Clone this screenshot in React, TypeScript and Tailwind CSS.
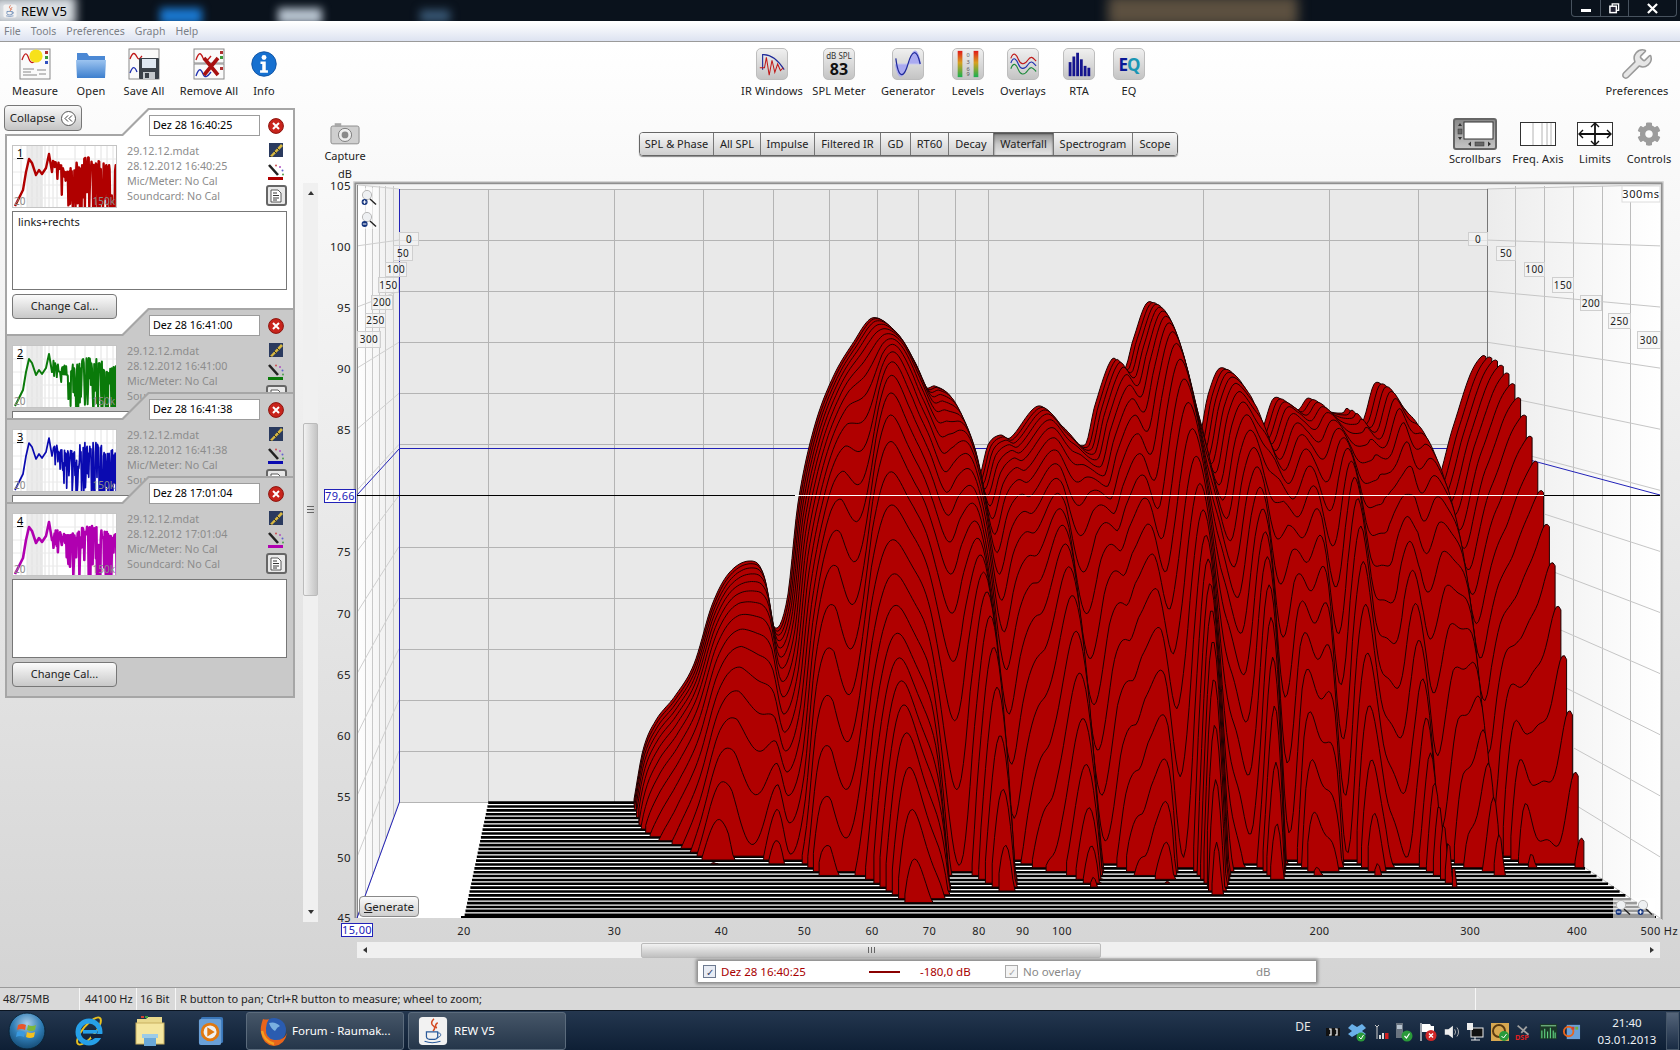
import { ReactNode } from "react";
import { Wrench } from "lucide-react";
import { FaCog } from "react-icons/fa";

// ---- waterfall geometry (page pixels, the svg viewBox uses the same numbers)
const SLICES = 30;
const backX = (u: number) => 399 + 1088 * u;
const frontX = (u: number) => 357 + 1303 * u;
const backY = (db: number) => 802 - (db - 45) * 10.217;
const frontY = (db: number) => 918 - (db - 45) * 12.22;
const mix = (a: number, b: number, t: number) => a + (b - a) * t;
const logU = (f: number) => Math.log10(f / 15) / Math.log10(500 / 15);

const OUTLINE: [number, number][] = [
  [560, 960], [620, 860], [632, 810], [643, 750], [656, 720], [675, 696], [694, 664], [712, 605], [729, 573], [750, 561],
  [763, 573], [774, 627], [787, 600], [798, 503], [814, 428], [833, 377], [853, 343], [872, 318], [893, 330], [910, 357],
  [925, 387], [935, 386], [950, 397], [963, 430], [977, 480], [988, 445], [1000, 435], [1010, 438], [1038, 406], [1060, 425],
  [1085, 445], [1095, 405], [1112, 359], [1125, 368], [1133, 340], [1148, 302], [1165, 325], [1178, 380], [1196, 448], [1208, 395],
  [1220, 368], [1238, 385], [1258, 435], [1273, 399], [1285, 402], [1298, 410], [1308, 398], [1325, 410], [1343, 413], [1347, 408],
  [1362, 422], [1375, 383], [1392, 400], [1408, 427], [1432, 490], [1453, 427], [1470, 375], [1482, 356], [1488, 358],
];

function outlineY(x: number) {
  const p = OUTLINE;
  if (x >= p[p.length - 1][0]) return p[p.length - 1][1];
  let k = 0;
  while (p[k + 1][0] < x) k++;
  const a = p[Math.max(k - 1, 0)], b = p[k], c = p[k + 1], d = p[Math.min(k + 2, p.length - 1)];
  const t = (x - b[0]) / (c[0] - b[0]);
  const m1 = ((c[1] - a[1]) / (c[0] - a[0] || 1)) * (c[0] - b[0]);
  const m2 = ((d[1] - b[1]) / (d[0] - b[0] || 1)) * (c[0] - b[0]);
  const t2 = t * t, t3 = t2 * t;
  return (2 * t3 - 3 * t2 + 1) * b[1] + (t3 - 2 * t2 + t) * m1 + (-2 * t3 + 3 * t2) * c[1] + (t3 - t2) * m2;
}

function lobes(x: number, i: number) {
  const p = 5e-4 * Math.pow(Math.max(x - 600, 0), 1.5) + 0.13 * Math.sin(x / 83 + i * 0.23);
  const spread = 0.75 + 0.25 * Math.sin(x / 37 + i * 0.4);
  const l = spread * (0.7 * Math.sin(2 * Math.PI * p - 1.38 + 0.05 * i) + 0.3 * Math.sin(2 * Math.PI * 1.7 * p + 1 + 0.17 * i));
  const fade = Math.min(1, (1487 - x) / 60);
  return (l > 0 ? 0.42 * l : 0.62 * l) * fade;
}

function drop(i: number) {
  return i <= 16 ? 0.3 * Math.pow(i, 2.4) : 232 + 36 * (i - 16);
}

function level(x: number, i: number) {
  const top = 45 + (802 - outlineY(x)) / 10.217;
  const w = x < 900 ? 1 : 1 + (0.7 * (x - 900)) / 587;
  return top - (drop(i) * w * (1 - lobes(x, i))) / 11;
}

function slicePaths(i: number) {
  const t = i / SLICES;
  const base = mix(802, 918, t);
  const paths: string[] = [];
  let run: string[] = [];
  const close = (x: number) => {
    if (run.length) paths.push(`M${run[0].split(",")[0]},${base} L${run.join(" L")} L${x.toFixed(1)},${base} Z`);
    run = [];
  };
  let last = 0;
  for (let bx = 560; bx <= 1487; bx += 2) {
    const u = (bx - 399) / 1088;
    const db = level(bx, i);
    const px = mix(backX(u), frontX(u), t);
    last = px;
    if (db > 45) run.push(`${px.toFixed(1)},${mix(backY(db), frontY(db), t).toFixed(1)}`);
    else close(px);
  }
  close(last);
  return paths;
}

const WATERFALL = Array.from({ length: SLICES }, (_, i) => slicePaths(i));
const FREQ = [20, 30, 40, 50, 60, 70, 80, 90, 100, 200, 300, 400, 500];
const DB_LINES = Array.from({ length: 13 }, (_, k) => 105 - k * 5);
const TIME_LEFT = [365, 372, 379, 385, 393];
const TIME_RIGHT = [1515, 1544, 1573, 1602, 1630];
const LEFT_TAGS: [string, number, number, number, number][] = [
  ["0", 399, 232, 19, 13], ["50", 393, 245, 19, 15], ["100", 385, 262, 21, 14], ["150", 378, 277, 20, 15],
  ["200", 371, 295, 21, 14], ["250", 365, 313, 20, 14], ["300", 357, 331, 23, 16],
];
const RIGHT_TAGS: [string, number, number, number, number][] = [
  ["0", 1468, 232, 19, 13], ["50", 1496, 246, 19, 14], ["100", 1524, 262, 20, 14], ["150", 1552, 277, 21, 15],
  ["200", 1580, 295, 21, 15], ["250", 1608, 313, 22, 15], ["300", 1637, 331, 23, 17],
];

function MagnifierIcon({ x, y, plus }: { x: number; y: number; plus?: boolean }) {
  return (
    <g transform={`translate(${x},${y})`}>
      <circle cx="6" cy="6" r="4.6" fill="#eef0f2" stroke="#b9b9b9" />
      <path d="M9 10 L15 15.5" stroke="#222" strokeWidth="1.4" />
      <circle cx="3.6" cy="13" r="3" fill="#15357e" />
      <path d="M1.8 13 H5.4" stroke="#fff" strokeWidth="1" />
      {plus && <path d="M3.6 11.2 V14.8" stroke="#fff" strokeWidth="1" />}
    </g>
  );
}

function TimeTag({ tag }: { tag: [string, number, number, number, number] }) {
  const [label, x, y, w, h] = tag;
  return (
    <g>
      <rect x={x + 0.5} y={y + 0.5} width={w} height={h} fill="#f4f4f4" fillOpacity="0.7" stroke="#cfcfcf" />
      <text x={x + w / 2 + 0.5} y={y + h / 2 + 4} textAnchor="middle" fontSize="10" fill="#222" letterSpacing="0.4">{label}</text>
    </g>
  );
}

function WaterfallChart() {
  return (
    <svg viewBox="318 170 1362 772" className="block w-[1362px] h-[772px] overflow-visible" fontFamily="'Noto Sans', sans-serif">
      <defs>
        <linearGradient id="wallL" x1="0" x2="1" y1="0" y2="0">
          <stop offset="0" stopColor="#ffffff" />
          <stop offset="1" stopColor="#ececec" />
        </linearGradient>
        <linearGradient id="wallR" x1="0" x2="1" y1="0" y2="0">
          <stop offset="0" stopColor="#ececec" />
          <stop offset="1" stopColor="#ffffff" />
        </linearGradient>
      </defs>

      <path d="M353.5 918 V181.5 H1663.5 V922" fill="none" stroke="#d6d6d6" />
      <path d="M354.5 918 V182.5 H1662.5 V920" fill="none" stroke="#b4b4b4" />
      <path d="M355.5 918 V183.5 H1661.5 V919" fill="none" stroke="#8f8f8f" strokeWidth="1.4" />

      <polygon points="357,185 399,189 399,802 357,918" fill="url(#wallL)" />
      <polygon points="1660,185 1487,189 1487,802 1660,918" fill="url(#wallR)" />
      <polygon points="357,185 1660,185 1487,189 399,189" fill="#f4f4f4" />
      <rect x="399" y="189" width="1088" height="613" fill="#e9e9e9" />
      <polygon points="399,802 1487,802 1660,918 357,918" fill="#ffffff" />

      {TIME_LEFT.map((x) => (
        <line key={x} x1={x + 0.5} x2={x + 0.5} y1="186" y2={802 + ((399 - x) / 42) * 116} stroke="#c8c8c8" />
      ))}
      {TIME_RIGHT.map((x) => (
        <line key={x} x1={x + 0.5} x2={x + 0.5} y1="186" y2={802 + ((x - 1487) / 173) * 116} stroke="#bdbdbd" />
      ))}
      {DB_LINES.map((db) => (
        <g key={db} stroke="#cfcfcf">
          <line x1="357" x2="399" y1={frontY(db)} y2={backY(db)} />
          <line x1="1487" x2="1660" y1={backY(db)} y2={frontY(db)} stroke="#c6c6c6" />
          <line x1="399" x2="1487" y1={Math.round(backY(db)) + 0.5} y2={Math.round(backY(db)) + 0.5} stroke="#b4b4b4" />
        </g>
      ))}
      {FREQ.map((f) => {
        const x = Math.round(backX(logU(f))) + 0.5;
        return <line key={f} x1={x} x2={x} y1="189" y2="802" stroke={f === 500 ? "#777" : "#b4b4b4"} />;
      })}
      <line x1="357.5" x2="357.5" y1="185" y2="918" stroke="#888" />

      <path d="M399.5 189 V802 L357 918" fill="none" stroke="#2222b8" />
      <path d="M357 495 L399.5 448.5 H1487 L1660 495" fill="none" stroke="#2222b8" />

      {WATERFALL.map((paths, i) => {
        const t = i / SLICES;
        const y = mix(802, 918, t);
        return (
          <g key={i}>
            <line x1={mix(backX(0.082), frontX(0.082), t)} x2={mix(backX(1), frontX(1), t)} y1={y + 0.6} y2={y + 0.6} stroke="#000" strokeWidth="2.6" />
            {paths.map((d, k) => (
              <path key={k} d={d} fill="#b00000" stroke="#1c0000" strokeWidth="1" strokeLinejoin="round" />
            ))}
          </g>
        );
      })}
      <line x1="461" x2="1656" y1="917" y2="917" stroke="#000" strokeWidth="2" />

      <line x1="357" x2="795" y1="495.5" y2="495.5" stroke="#000" strokeWidth="1.2" />
      <line x1="795" x2="1544" y1="495.5" y2="495.5" stroke="#fff" strokeWidth="1.2" />
      <line x1="1544" x2="1660" y1="495.5" y2="495.5" stroke="#000" strokeWidth="1.2" />

      {LEFT_TAGS.map((t) => <TimeTag key={t[0]} tag={t} />)}
      {RIGHT_TAGS.map((t) => <TimeTag key={t[0]} tag={t} />)}
      <rect x="1622" y="186" width="38" height="16" fill="#fff" stroke="#dcdcdc" />
      <text x="1641" y="198" textAnchor="middle" fontSize="11" fill="#222" letterSpacing="0.6">300ms</text>

      <rect x="360" y="188" width="18" height="41" fill="#fff" fillOpacity="0.5" />
      <MagnifierIcon x={361} y={189} plus />
      <MagnifierIcon x={361} y={211} />
      <rect x="1613" y="898" width="42" height="20" fill="#fff" fillOpacity="0.6" />
      <MagnifierIcon x={1615} y={899} />
      <MagnifierIcon x={1637} y={899} plus />

      <text x="352" y="178" textAnchor="end" fontSize="11" fill="#222">dB</text>
      {DB_LINES.filter((d) => d !== 80 && d !== 45).map((db) => (
        <text key={db} x="351" y={frontY(db) + 5} textAnchor="end" fontSize="11.5" fill="#222" letterSpacing="0.4">{db}</text>
      ))}
      <text x="351" y="922" textAnchor="end" fontSize="11" fill="#222" letterSpacing="0.4">45</text>
      <rect x="324.5" y="489.5" width="31" height="13" fill="#fff" stroke="#2222b8" />
      <text x="340" y="500" textAnchor="middle" fontSize="11" fill="#2222b8" letterSpacing="0.4">79,66</text>
      <rect x="341.5" y="923.5" width="31" height="13" fill="#fff" stroke="#2222b8" />
      <text x="357" y="934" textAnchor="middle" fontSize="11" fill="#2222b8" letterSpacing="0.4">15,00</text>
      {FREQ.map((f) => (
        <text key={f} x={f === 500 ? 1678 : frontX(logU(f))} y="935" textAnchor={f === 500 ? "end" : "middle"} fontSize="11" fill="#222" letterSpacing="0.4">
          {f === 500 ? "500 Hz" : f}
        </text>
      ))}
    </svg>
  );
}

// ---- toolbar icons
function Tile({ children }: { children: ReactNode }) {
  return (
    <div className="w-[32px] h-[32px] rounded-[5px] border border-[#bdbdbd] bg-linear-to-b from-[#f0f0f0] to-[#c4c4c4] flex flex-col items-center justify-center overflow-hidden">
      {children}
    </div>
  );
}

function DocBase({ children }: { children?: ReactNode }) {
  return (
    <svg viewBox="0 0 32 32" className="w-[32px] h-[32px]">
      <rect x="1" y="1" width="30" height="30" fill="#fafafa" stroke="#8a8a8a" />
      <path d="M3 12 C6 3 8 5 10 11 S16 15 21 7" fill="none" stroke="#c01818" strokeWidth="1.3" />
      <rect x="26" y="3" width="3" height="3" fill="#b03030" />
      <rect x="26" y="8" width="3" height="3" fill="#3a9a3a" />
      <rect x="26" y="13" width="3" height="3" fill="#3050c0" />
      {children}
    </svg>
  );
}

function MeasureIcon() {
  return (
    <DocBase>
      <path d="M4 21 H15 M4 24 H12 M4 27 H18 M18 22 H27 M20 26 H27" stroke="#888" />
      <circle cx="17" cy="8" r="6.6" fill="#f7e11a" />
    </DocBase>
  );
}

function SaveIcon() {
  return (
    <svg viewBox="0 0 32 32" className="w-[32px] h-[32px]">
      <rect x="1" y="1" width="30" height="30" fill="#fafafa" stroke="#8a8a8a" />
      <path d="M2 11 C5 3 7 5 9 9 S12 10 14 8" fill="none" stroke="#c01818" strokeWidth="1.3" />
      <path d="M2 25 C5 17 7 19 9 24" fill="none" stroke="#2030b0" strokeWidth="1.3" />
      <rect x="11" y="10" width="20" height="21" rx="1" fill="#3a4048" />
      <rect x="14" y="11" width="14" height="9" fill="#dfe7f1" />
      <rect x="15" y="24" width="12" height="7" fill="#c4c8cc" />
      <rect x="17" y="25" width="4" height="5" fill="#3a4048" />
    </svg>
  );
}

function RemoveIcon() {
  return (
    <svg viewBox="0 0 32 32" className="w-[32px] h-[32px]">
      <rect x="1" y="1" width="30" height="14" fill="#fafafa" stroke="#8a8a8a" />
      <rect x="1" y="16" width="30" height="15" fill="#fafafa" stroke="#8a8a8a" />
      <path d="M3 12 C6 3 8 5 10 10 S15 12 18 8" fill="none" stroke="#c01818" strokeWidth="1.3" />
      <path d="M3 28 C6 19 8 21 10 26 S15 28 18 24" fill="none" stroke="#2030b0" strokeWidth="1.3" />
      <rect x="27" y="3" width="3" height="3" fill="#b03030" />
      <rect x="27" y="8" width="3" height="3" fill="#3a9a3a" />
      <rect x="27" y="19" width="3" height="3" fill="#b03030" />
      <path d="M11 10 L25 27 M25 10 L11 27" stroke="#a81010" strokeWidth="3.6" />
    </svg>
  );
}

function FolderIcon() {
  return (
    <svg viewBox="0 0 32 32" className="w-[32px] h-[32px]">
      <defs>
        <linearGradient id="folderG" x1="0" x2="0" y1="0" y2="1">
          <stop offset="0" stopColor="#9cc4f0" />
          <stop offset="1" stopColor="#3d7fce" />
        </linearGradient>
      </defs>
      <path d="M2 5 H12 L14 8 H30 V14 H2 Z" fill="#4b88d4" />
      <path d="M1 12 H31 L30 30 H2 Z" fill="url(#folderG)" />
    </svg>
  );
}

function InfoIcon() {
  return (
    <svg viewBox="0 0 32 32" className="w-[28px] h-[32px]">
      <circle cx="16" cy="16" r="14" fill="#1670d0" />
      <circle cx="16" cy="16" r="14" fill="none" stroke="#0d4f9e" />
      <circle cx="16" cy="8.5" r="2.8" fill="#fff" />
      <path d="M12 13 H18 V23 H20.5 V26 H11.5 V23 H14 V16 H12 Z" fill="#fff" />
    </svg>
  );
}

function IrIcon() {
  return (
    <svg viewBox="0 0 32 32" className="w-[30px] h-[30px]">
      <path d="M6 22 V6 Q18 5 29 22" fill="none" stroke="#1f2a9a" strokeWidth="1.2" />
      <path d="M3 20 H8 L10 9 L13 28 L16 12 L19 25 L22 16 L25 23 L28 20" fill="none" stroke="#c01818" strokeWidth="1.1" />
    </svg>
  );
}

function GeneratorIcon() {
  return (
    <svg viewBox="0 0 32 32" className="w-[30px] h-[30px]">
      <path d="M2 16 C6 38 12 30 16 16 C20 0 26 -6 30 16 H2 Z" fill="#aaaaf0" />
      <path d="M2 16 H30" stroke="#c8c8f0" />
      <path d="M3 10 C6 34 12 30 16 16 C20 2 25 -2 29 16" fill="none" stroke="#1f2a9a" strokeWidth="1.3" />
    </svg>
  );
}

function LevelsIcon() {
  return (
    <svg viewBox="0 0 32 32" className="w-[30px] h-[30px]">
      <defs>
        <linearGradient id="lvlG" x1="0" x2="0" y1="0" y2="1">
          <stop offset="0" stopColor="#e01818" />
          <stop offset="0.45" stopColor="#d8a020" />
          <stop offset="1" stopColor="#18b050" />
        </linearGradient>
      </defs>
      <rect x="5" y="2" width="5" height="28" fill="url(#lvlG)" />
      <rect x="22" y="2" width="5" height="28" fill="url(#lvlG)" />
      <text x="16" y="9" textAnchor="middle" fontSize="6" fill="#555">0</text>
      <text x="16" y="16" textAnchor="middle" fontSize="6" fill="#555">3</text>
      <text x="16" y="23" textAnchor="middle" fontSize="6" fill="#555">6</text>
      <text x="16" y="29" textAnchor="middle" fontSize="6" fill="#555">9</text>
    </svg>
  );
}

function OverlaysIcon() {
  return (
    <svg viewBox="0 0 32 32" className="w-[30px] h-[30px]" fill="none" strokeWidth="1.2">
      <path d="M3 10 C6 2 9 6 11 11 S17 18 21 12 S27 10 30 13" stroke="#c01818" />
      <path d="M3 15 C6 7 9 11 11 16 S17 23 21 17 S27 15 30 18" stroke="#2030b0" />
      <path d="M3 21 C6 13 9 17 11 22 S17 29 21 23 S27 21 30 24" stroke="#1c8a3a" />
    </svg>
  );
}

function RtaIcon() {
  return (
    <svg viewBox="0 0 32 32" className="w-[30px] h-[30px]" fill="#14148e">
      <rect x="5" y="14" width="3" height="15" />
      <rect x="9" y="8" width="3" height="21" />
      <rect x="13" y="4" width="3" height="25" />
      <rect x="17" y="11" width="3" height="18" />
      <rect x="21" y="18" width="3" height="11" />
      <rect x="25" y="20" width="3" height="9" />
    </svg>
  );
}

function ToolItem({ label, icon, width }: { label: string; icon: ReactNode; width: string }) {
  return (
    <div className={`${width} shrink-0 flex flex-col items-center`}>
      <div className="h-[32px] flex items-center justify-center">{icon}</div>
      <div className="mt-[3px] text-[11px] leading-[15px] text-[#222] whitespace-nowrap tracking-[0.15px]">{label}</div>
    </div>
  );
}

// ---- measurement panels
function RedX() {
  return (
    <svg viewBox="0 0 16 16" className="w-[16px] h-[16px] shrink-0">
      <circle cx="8" cy="8" r="7.4" fill="#c8241c" stroke="#8c140e" />
      <path d="M5 5 L11 11 M11 5 L5 11" stroke="#fff" strokeWidth="2" />
    </svg>
  );
}

function PencilIcon() {
  return (
    <svg viewBox="0 0 16 16" className="w-[16px] h-[16px]">
      <rect x="1" y="1" width="14" height="14" fill="#2a3a5e" />
      <path d="M2 14 L13 2 L15 4 L4 15 Z" fill="#d8b840" />
      <path d="M6 9 L9 12 M9 6 L12 9" stroke="#3a3a20" />
      <path d="M2 14 L4 15 L2 15 Z" fill="#222" />
    </svg>
  );
}

function ColourIcon({ color }: { color: string }) {
  return (
    <svg viewBox="0 0 18 18" className="w-[18px] h-[18px]">
      <path d="M2 2 L11 12" stroke="#222" strokeWidth="2.6" />
      <circle cx="9" cy="2.5" r="1" fill="#d05050" />
      <circle cx="13" cy="4" r="1" fill="#b050c0" />
      <circle cx="15.5" cy="7.5" r="1" fill="#6060d0" />
      <circle cx="16" cy="11.5" r="1" fill="#50a050" />
      <rect x="1" y="14" width="15" height="3" fill={color} />
    </svg>
  );
}

function NoteButton() {
  return (
    <div className="w-[21px] h-[21px] rounded-[3px] border-2 border-[#666] bg-[#e8e8e8] flex items-center justify-center">
      <svg viewBox="0 0 12 14" className="w-[12px] h-[14px]">
        <path d="M1 1 H8 L11 4 V13 H1 Z" fill="#fff" stroke="#333" strokeWidth="0.8" />
        <path d="M3 4 H7 M3 6.5 H9 M3 9 H9 M3 11 H7" stroke="#222" strokeWidth="0.9" />
      </svg>
    </div>
  );
}

function traceLine(seed: number) {
  const head: [number, number][] = [[2, 60], [7, 50], [10, 44], [13, 26], [16, 13], [19, 17], [23, 29], [26, 24], [29, 28], [33, 22], [36, 8], [39, 26]];
  const pts = head.map((p) => p.join(","));
  for (let x = 40; x <= 104; x += 0.55) {
    const a = Math.sin(x * 12.9898 + seed) * 43758.5453;
    const r = a - Math.floor(a);
    const b = Math.sin(x * 78.233 + seed * 3) * 12543.123;
    const q = b - Math.floor(b);
    const deep = r > 0.45 ? (14 + (x - 40) * 0.95) * q * 1.5 : 10 * q;
    pts.push(`${x.toFixed(1)},${Math.min(15 + 4 * Math.sin(x / 7) + deep, 62).toFixed(1)}`);
  }
  return pts.join(" ");
}

function Thumb({ n, color, seed, width }: { n: number; color: string; seed: number; width: number }) {
  const grid = [8, 14, 19, 24, 28, 32, 36, 40, 44, 62, 72, 82, 88, 94, 100];
  return (
    <div className="relative w-[105px] h-[63px] shrink-0 border border-[#c4c4c4] bg-white overflow-hidden">
      <svg viewBox="0 0 105 63" className="block w-[105px] h-[63px]">
        <rect x="14" y="0" width="16" height="63" fill="#ececec" />
        {grid.map((x) => <line key={x} x1={x} x2={x} y1="0" y2="63" stroke="#e2e2e2" />)}
        {[13, 26, 39, 52].map((y) => <line key={y} x1="0" x2="105" y1={y} y2={y} stroke="#eaeaea" />)}
        <polyline points={traceLine(seed)} fill="none" stroke={color} strokeWidth={width} strokeLinejoin="round" />
      </svg>
      <span className="absolute left-[4px] top-[-1px] text-[11px] leading-[15px] text-black underline">{n}</span>
      <span className="absolute left-[1px] bottom-[-1px] text-[10px] leading-[13px] text-[#8a8a8a]">20</span>
      <span className="absolute right-[1px] bottom-[-1px] text-[10px] leading-[13px] text-[#8a8a8a]">150k</span>
    </div>
  );
}

function Panel({ p }: { p: (typeof PANELS)[number] }) {
  return (
    <div className={`relative ${p.layer} ${p.outer} w-[290px] ml-[5px] bg-[#a6a6a6] [clip-path:polygon(143px_0,100%_0,100%_100%,0_100%,0_26px,117px_26px)]`}>
      <div className={`h-full ${p.bg} [clip-path:polygon(144px_2px,288px_2px,288px_calc(100%_-_2px),2px_calc(100%_-_2px),2px_28px,118px_28px)]`}>
        <div className="flex items-center pt-[7px]">
          <div className="ml-[144px] w-[111px] h-[21px] bg-white border border-[#9c9c9c] pl-[3px] text-[10.75px] leading-[19px] text-black">{p.name}</div>
          <div className="ml-[8px]"><RedX /></div>
        </div>
        <div className="flex mt-[9px] ml-[7px] h-[63px]">
          <Thumb n={p.n} color={p.color} seed={p.seed} width={p.trace} />
          <div className="ml-[10px] -mt-[1px] w-[133px] text-[10.75px] leading-[15px] text-[#8c8c8c] whitespace-nowrap">
            <div>29.12.12.mdat</div>
            <div>{p.date}</div>
            <div>Mic/Meter: No Cal</div>
            <div>Soundcard: No Cal</div>
          </div>
          <div className="w-[22px] ml-[5px] flex flex-col items-center">
            <div className="mt-[-3px]"><PencilIcon /></div>
            <div className="mt-[5px]"><ColourIcon color={p.color} /></div>
            <div className="mt-[4px]"><NoteButton /></div>
          </div>
        </div>
        <div className="mt-[3px] ml-[7px] w-[275px] h-[79px] bg-white border border-[#777] px-[5px] text-[11px] leading-[20px] text-[#222]">{p.note}</div>
        <button className="mt-[4px] ml-[7px] w-[105px] h-[25px] rounded-[4px] border border-[#777] bg-linear-to-b from-[#fbfbfb] to-[#c8c8c8] text-[11px] text-[#222]">Change Cal...</button>
      </div>
    </div>
  );
}

const PANELS = [
  { n: 1, name: "Dez 28 16:40:25", date: "28.12.2012 16:40:25", color: "#b00000", seed: 3, trace: 2.4, note: "links+rechts", bg: "bg-white", outer: "h-[228px] -mb-[28px]", layer: "z-[1]" },
  { n: 2, name: "Dez 28 16:41:00", date: "28.12.2012 16:41:00", color: "#0a7a0a", seed: 5, trace: 2, note: "links", bg: "bg-[#c9c9c9]", outer: "h-[221px] -mb-[137px]", layer: "z-[2]" },
  { n: 3, name: "Dez 28 16:41:38", date: "28.12.2012 16:41:38", color: "#0a0ab0", seed: 7, trace: 1.7, note: "rechts", bg: "bg-[#c9c9c9]", outer: "h-[221px] -mb-[137px]", layer: "z-[3]" },
  { n: 4, name: "Dez 28 17:01:04", date: "28.12.2012 17:01:04", color: "#b000b0", seed: 11, trace: 2.6, note: "", bg: "bg-[#c9c9c9]", outer: "h-[222px]", layer: "z-[4]" },
];

function Sidebar() {
  return (
    <div className="w-[318px] shrink-0 flex">
      <div className="w-[295px] shrink-0">
        <button className="relative z-[10] ml-[4px] -mb-[23px] w-[78px] h-[26px] rounded-[4px] border border-[#777] bg-linear-to-b from-[#fafafa] to-[#c4c4c4] flex items-center justify-center gap-[6px] text-[11.5px] text-[#222]">
          Collapse
          <span className="w-[15px] h-[15px] rounded-full border border-[#555] bg-white flex items-center justify-center">
            <svg viewBox="0 0 10 8" className="w-[9px] h-[7px]"><path d="M4.5 0.5 L1 4 L4.5 7.5 M9 0.5 L5.5 4 L9 7.5" fill="none" stroke="#222" /></svg>
          </span>
        </button>
        {PANELS.map((p) => <Panel key={p.n} p={p} />)}
      </div>
      <div className="ml-[8px] mt-[78px] w-[15px] h-[739px] bg-[#f0f0f0] flex flex-col items-center text-[#333]">
        <div className="mt-[8px] w-0 h-0 border-x-[3px] border-x-transparent border-b-[4px] border-b-[#333]" />
        <div className="mt-[228px] w-[15px] h-[173px] rounded-[2px] border border-[#bbb] bg-linear-to-r from-[#f2f2f2] to-[#c4c4c4] flex flex-col items-center justify-center gap-[2px]">
          <div className="w-[7px] h-px bg-[#666]" />
          <div className="w-[7px] h-px bg-[#666]" />
          <div className="w-[7px] h-px bg-[#666]" />
        </div>
        <div className="mt-auto mb-[8px] w-0 h-0 border-x-[3px] border-x-transparent border-t-[4px] border-t-[#333]" />
      </div>
    </div>
  );
}

// ---- graph header
const TABS = [
  { label: "SPL & Phase", w: "w-[74px]" }, { label: "All SPL", w: "w-[47px]" }, { label: "Impulse", w: "w-[54px]" },
  { label: "Filtered IR", w: "w-[66px]" }, { label: "GD", w: "w-[30px]" }, { label: "RT60", w: "w-[38px]" },
  { label: "Decay", w: "w-[45px]" }, { label: "Waterfall", w: "w-[60px]", on: true }, { label: "Spectrogram", w: "w-[79px]" },
  { label: "Scope", w: "w-[44px]" },
];

function GraphTabs() {
  return (
    <div className="ml-[267px] mt-[27px] h-[24px] w-[539px] shrink-0 flex rounded-[4px] border border-[#666] shadow-[0_1px_1px_#888] overflow-hidden">
      {TABS.map((t) => (
        <div
          key={t.label}
          className={`${t.w} shrink-0 flex items-center justify-center text-[11px] text-[#222] whitespace-nowrap border-r border-[#777] last:border-r-0 ${
            t.on ? "bg-linear-to-b from-[#8c8c8c] via-[#c8c8c8] to-[#e4e4e4] shadow-[inset_0_1px_2px_#444]" : "bg-linear-to-b from-[#f8f8f8] to-[#cfcfcf]"
          }`}
        >
          {t.label}
        </div>
      ))}
    </div>
  );
}

function CameraIcon() {
  return (
    <svg viewBox="0 0 32 24" className="w-[30px] h-[23px]">
      <rect x="1" y="4" width="30" height="19" rx="2" fill="#cfcfcf" stroke="#8a8a8a" />
      <rect x="5" y="1" width="7" height="4" fill="#a8a8a8" />
      <circle cx="16" cy="13.5" r="7" fill="#eee" stroke="#777" />
      <circle cx="16" cy="13.5" r="3.6" fill="#8a8a8a" />
    </svg>
  );
}

function ScrollbarsIcon() {
  return (
    <div className="w-[44px] h-[32px] rounded-[3px] border-2 border-[#666] bg-linear-to-b from-[#8a8a8a] to-[#c4c4c4] flex">
      <svg viewBox="0 0 40 28" className="w-[40px] h-[28px]">
        <rect x="9" y="2" width="29" height="17" fill="#fff" stroke="#333" />
        <path d="M3 6 L5 3 L7 6 Z M3 17 L5 20 L7 17 Z M13 24 L16 21.5 L16 26.5 Z M36 24 L33 21.5 L33 26.5 Z" fill="#333" />
        <rect x="3" y="9" width="4" height="5" fill="#666" stroke="#333" strokeWidth="0.5" />
        <rect x="20" y="22" width="9" height="4" fill="#666" stroke="#333" strokeWidth="0.5" />
      </svg>
    </div>
  );
}

function FreqAxisIcon() {
  return (
    <svg viewBox="0 0 36 24" className="w-[36px] h-[24px]">
      <rect x="0.5" y="0.5" width="35" height="23" fill="#fff" stroke="#333" />
      <path d="M13 1 V23 M22 1 V23 M27 1 V23 M31 1 V23" stroke="#b4b4b4" />
    </svg>
  );
}

function LimitsIcon() {
  return (
    <svg viewBox="0 0 36 24" className="w-[36px] h-[24px]" fill="none" stroke="#111">
      <rect x="0.5" y="0.5" width="35" height="23" fill="#fff" stroke="#333" />
      <path d="M2 12 H34 M18 1 V23" strokeWidth="1.8" />
      <path d="M6 8 L2 12 L6 16 M30 8 L34 12 L30 16 M14 5 L18 1 L22 5 M14 19 L18 23 L22 19" strokeWidth="1.4" />
    </svg>
  );
}

function ViewItem({ label, icon, width }: { label: string; icon: ReactNode; width: string }) {
  return (
    <div className={`${width} shrink-0 flex flex-col items-center pt-[13px]`}>
      <div className="h-[32px] flex items-center justify-center">{icon}</div>
      <div className="mt-[1px] text-[11px] leading-[15px] text-[#222] whitespace-nowrap tracking-[0.15px]">{label}</div>
    </div>
  );
}

function LegendCheck({ muted }: { muted?: boolean }) {
  return (
    <div className={`w-[13px] h-[13px] shrink-0 border flex items-center justify-center text-[10px] leading-none ${muted ? "border-[#aaa] bg-[#f4f4f4] text-[#aaa]" : "border-[#6d7a90] bg-[#e8ecf4] text-[#33406a]"}`}>✓</div>
  );
}

// ---- taskbar
function StartOrb() {
  return (
    <svg viewBox="0 0 38 38" className="w-[38px] h-[38px]">
      <defs>
        <radialGradient id="orb" cx="0.5" cy="0.3" r="0.8">
          <stop offset="0" stopColor="#a8cde8" />
          <stop offset="0.5" stopColor="#2f7cb4" />
          <stop offset="1" stopColor="#0c3a5e" />
        </radialGradient>
      </defs>
      <circle cx="19" cy="19" r="18" fill="url(#orb)" stroke="#0a2438" />
      <path d="M10 13 Q14 11 18 13 L17 18 Q13 16 9 18 Z" fill="#e8562a" />
      <path d="M20 13 Q24 15 28 13 L27 18 Q23 20 19 18 Z" fill="#7cb83a" />
      <path d="M9 20 Q13 18 17 20 L16 25 Q12 23 8 25 Z" fill="#3a9ae0" />
      <path d="M19 20 Q23 22 27 20 L26 25 Q22 27 18 25 Z" fill="#f4c020" />
    </svg>
  );
}

function IeIcon() {
  return (
    <svg viewBox="0 0 32 34" className="w-[32px] h-[34px]">
      <ellipse cx="16" cy="17" rx="17" ry="6" transform="rotate(-50 16 17)" fill="none" stroke="#e8c020" strokeWidth="2" />
      <circle cx="16" cy="18" r="11" fill="none" stroke="#26a0e8" strokeWidth="5" />
      <rect x="10" y="16" width="14" height="3.6" fill="#26a0e8" />
      <rect x="18" y="20" width="12" height="4" fill="#13233a" />
    </svg>
  );
}

function FolderTaskIcon() {
  return (
    <svg viewBox="0 0 32 34" className="w-[32px] h-[34px]">
      <path d="M3 5 H12 L14 3 H28 V10 H3 Z" fill="#e8d88c" />
      <rect x="7" y="2" width="3" height="2" fill="#d04030" />
      <rect x="11" y="2" width="3" height="2" fill="#40a040" />
      <rect x="2" y="9" width="28" height="21" fill="#f4e6a0" stroke="#c8b060" />
      <rect x="10" y="22" width="12" height="10" fill="#6aa8d8" />
      <rect x="8" y="20" width="16" height="4" fill="#9ccce8" />
    </svg>
  );
}

function MediaIcon() {
  return (
    <svg viewBox="0 0 28 32" className="w-[26px] h-[30px]">
      <rect x="3" y="1" width="24" height="28" rx="2" fill="#3a76b8" />
      <rect x="1" y="3" width="24" height="28" rx="2" fill="#6aa0d8" />
      <circle cx="13" cy="17" r="8.5" fill="#f0f0f0" stroke="#e07810" strokeWidth="3" />
      <path d="M10 12 L18 17 L10 22 Z" fill="#e07810" />
    </svg>
  );
}

function FirefoxIcon() {
  return (
    <svg viewBox="0 0 32 32" className="w-[32px] h-[32px] shrink-0">
      <circle cx="17" cy="15" r="12" fill="#2a5cb0" />
      <path d="M12 8 Q18 6 23 11 Q20 12 18 16 Q14 14 12 8Z" fill="#7ab0e0" />
      <path d="M6 4 Q3 12 4 18 Q6 30 17 31 Q28 30 30 18 Q27 26 17 25 Q8 23 9 13 Q9 8 12 4 Q9 5 6 4Z" fill="#e8641c" />
      <path d="M5 16 Q7 26 17 29" stroke="#f4a020" strokeWidth="2.4" fill="none" />
    </svg>
  );
}

function JavaIcon({ size }: { size: string }) {
  return (
    <svg viewBox="0 0 32 32" className={`${size} shrink-0`}>
      <rect x="1" y="1" width="30" height="30" rx="4" fill="#f2f2f2" />
      <path d="M17 3 Q12 8 17 11 Q19 13 16 16 M21 7 Q17 10 20 13" fill="none" stroke="#d44a20" strokeWidth="1.6" />
      <path d="M9 17 H21 V22 Q21 25 15 25 Q9 25 9 22 Z" fill="none" stroke="#2a5a9a" strokeWidth="1.3" />
      <path d="M21 18 Q25 18 24 21 Q23 23 20 23" fill="none" stroke="#2a5a9a" />
      <path d="M7 27 Q15 30 24 27" fill="none" stroke="#2a5a9a" strokeWidth="1.2" />
    </svg>
  );
}

function TrayIcons() {
  return (
    <div className="ml-[6px] w-[260px] shrink-0 flex items-center gap-[4.5px] h-[20px] mt-[2px]">
      <svg viewBox="0 0 18 18" className="w-[18px] h-[18px]"><rect x="2" y="5" width="14" height="8" fill="#111" /><path d="M5 6 H7 V12 H5 M11 6 H13 V12 H11" fill="none" stroke="#fff" strokeWidth="1.2" /></svg>
      <svg viewBox="0 0 20 20" className="w-[20px] h-[20px]"><path d="M5 2 L10 5 L15 2 L19 6 L15 9 L19 12 L15 15 L10 12 L5 15 L1 12 L5 9 L1 6 Z" fill="#6ab0e8" /><circle cx="14" cy="15" r="4.5" fill="#2a9a3a" /><path d="M12 15 L14 17 L16.5 13" stroke="#fff" fill="none" /></svg>
      <svg viewBox="0 0 18 18" className="w-[18px] h-[18px]"><path d="M4 2 L6 4 L8 2 M6 4 V16" stroke="#ccc" fill="none" /><rect x="8" y="12" width="2" height="4" fill="#ddd" /><rect x="11" y="10" width="2" height="6" fill="#ddd" /><rect x="14" y="10" width="3.5" height="6" fill="#d02020" /></svg>
      <svg viewBox="0 0 20 20" className="w-[20px] h-[20px]"><rect x="2" y="1" width="7" height="15" fill="#6a7480" /><rect x="3" y="3" width="5" height="4" fill="#b8c4d0" /><circle cx="13" cy="14" r="5.5" fill="#2a9a3a" /><path d="M10.5 14 L12.5 16 L15.5 11.5" stroke="#fff" fill="none" strokeWidth="1.2" /></svg>
      <svg viewBox="0 0 20 20" className="w-[20px] h-[20px]"><path d="M3 1 V19" stroke="#eee" strokeWidth="1.2" /><path d="M4 2 H12 L13 4 H16 V10 H4 Z" fill="#fff" /><circle cx="13" cy="13.5" r="5.5" fill="#d02828" /><path d="M11 11.5 L15 15.5 M15 11.5 L11 15.5" stroke="#fff" strokeWidth="1.4" /></svg>
      <svg viewBox="0 0 20 18" className="w-[18px] h-[18px]"><path d="M2 6 H6 L11 2 V16 L6 12 H2 Z" fill="#eee" /><path d="M13 6 Q15 9 13 12 M15.5 4 Q19 9 15.5 14" stroke="#bbb" fill="none" /></svg>
      <svg viewBox="0 0 20 20" className="w-[20px] h-[20px]"><rect x="6" y="6" width="12" height="9" fill="#111" stroke="#eee" /><rect x="2" y="1" width="6" height="7" fill="#eee" /><path d="M10 15 V18 M6 18 H15" stroke="#eee" /></svg>
      <svg viewBox="0 0 20 20" className="w-[20px] h-[20px]"><rect x="1" y="1" width="18" height="18" fill="#d8a850" /><circle cx="9" cy="9" r="6" fill="none" stroke="#5a3a10" strokeWidth="2" /><circle cx="14" cy="14" r="5" fill="#2a9a3a" /><path d="M11.5 14 L13.5 16 L16.5 12" stroke="#fff" fill="none" /></svg>
      <svg viewBox="0 0 22 20" className="w-[20px] h-[20px]"><path d="M4 3 L16 13 M8 11 L14 4" stroke="#a0a0a0" strokeWidth="2" /><text x="1" y="19" fontSize="8" fontWeight="700" fill="#e02020">DSP</text></svg>
      <svg viewBox="0 0 20 20" className="w-[19px] h-[19px]"><rect x="1" y="2" width="18" height="16" fill="#1c3a28" /><path d="M3 17 V9 M6 17 V7 M9 17 V10 M12 17 V6 M15 17 V9 M17 17 V11" stroke="#5fd080" strokeWidth="1.2" /><path d="M2 4 H18" stroke="#8fe0a0" /></svg>
      <svg viewBox="0 0 20 20" className="w-[19px] h-[19px]"><rect x="5" y="3" width="14" height="15" fill="#6aa0d8" /><circle cx="7" cy="10" r="5" fill="none" stroke="#e8641c" strokeWidth="2" /><rect x="10" y="5" width="3" height="3" fill="#d04030" /><rect x="14" y="5" width="3" height="3" fill="#70b040" /></svg>
    </div>
  );
}

export default function App() {
  return (
    <div className="w-[1680px] h-[1050px] flex flex-col overflow-hidden font-['Noto_Sans',sans-serif] bg-[#d8d8d8]">
      {/* title bar */}
      <div className="relative h-[21px] shrink-0 bg-[#0a121c] overflow-hidden">
        <div className="absolute left-[-8px] top-[-4px] w-[84px] h-[30px] bg-[#d8dde2] blur-[5px]" />
        <div className="absolute left-[160px] top-[8px] w-[42px] h-[16px] bg-[#1a78d0] blur-[4px]" />
        <div className="absolute left-[278px] top-[8px] w-[44px] h-[16px] bg-[#b8c4d0] blur-[4px]" />
        <div className="absolute left-[420px] top-[10px] w-[30px] h-[12px] bg-[#3a5a78] blur-[5px]" />
        <div className="absolute left-[1108px] top-[-4px] w-[190px] h-[30px] bg-[#5c5040] blur-[6px]" />
        <div className="relative flex items-center h-[21px] pl-[3px] gap-[4px]">
          <JavaIcon size="w-[14px] h-[16px]" />
          <span className="text-[13px] leading-[20px] text-black">REW V5</span>
        </div>
        <div className="absolute right-[3px] top-0 flex h-[17px] rounded-b-[4px] border border-t-0 border-[#47525e] text-white">
          <div className="w-[29px] flex items-center justify-center border-r border-[#47525e]"><div className="w-[10px] h-[3px] mt-[4px] bg-white" /></div>
          <div className="w-[28px] flex items-center justify-center border-r border-[#47525e]">
            <svg viewBox="0 0 12 12" className="w-[11px] h-[11px]"><rect x="3.5" y="1" width="7" height="7" fill="none" stroke="#fff" strokeWidth="1.4" /><rect x="1" y="3.5" width="7" height="7" fill="#223" stroke="#fff" strokeWidth="1.6" /></svg>
          </div>
          <div className="w-[47px] flex items-center justify-center">
            <svg viewBox="0 0 12 12" className="w-[11px] h-[11px]"><path d="M1 1 L11 11 M11 1 L1 11" stroke="#fff" strokeWidth="2.4" /></svg>
          </div>
        </div>
      </div>
      <div className="h-px shrink-0 bg-white" />

      {/* menu */}
      <div className="h-[20px] shrink-0 flex items-center gap-[10px] pl-[4px] bg-linear-to-b from-[#ffffff] to-[#dde3f1] border-b border-[#9a9a9a] text-[10.5px] text-[#7b8087]">
        <span>File</span><span>Tools</span><span>Preferences</span><span>Graph</span><span>Help</span>
      </div>

      <div className="flex-1 min-h-0 flex flex-col bg-linear-to-b from-[#ffffff] to-[#d4d4d4]">
        {/* toolbar */}
        <div className="h-[63px] shrink-0 flex pt-[6px] pl-[7px]">
          <ToolItem width="w-[56px]" label="Measure" icon={<MeasureIcon />} />
          <ToolItem width="w-[56px]" label="Open" icon={<FolderIcon />} />
          <ToolItem width="w-[50px]" label="Save All" icon={<SaveIcon />} />
          <ToolItem width="w-[80px]" label="Remove All" icon={<RemoveIcon />} />
          <ToolItem width="w-[30px]" label="Info" icon={<InfoIcon />} />
          <div className="w-[457px] shrink-0" />
          <ToolItem width="w-[72px]" label="IR Windows" icon={<Tile><IrIcon /></Tile>} />
          <ToolItem
            width="w-[62px]"
            label="SPL Meter"
            icon={
              <Tile>
                <div className="text-[8px] leading-[10px] text-[#333]">dB SPL</div>
                <div className="text-[16px] leading-[17px] font-bold text-[#111]">83</div>
              </Tile>
            }
          />
          <ToolItem width="w-[76px]" label="Generator" icon={<Tile><GeneratorIcon /></Tile>} />
          <ToolItem width="w-[44px]" label="Levels" icon={<Tile><LevelsIcon /></Tile>} />
          <ToolItem width="w-[66px]" label="Overlays" icon={<Tile><OverlaysIcon /></Tile>} />
          <ToolItem width="w-[46px]" label="RTA" icon={<Tile><RtaIcon /></Tile>} />
          <ToolItem
            width="w-[54px]"
            label="EQ"
            icon={
              <Tile>
                <div className="text-[17px] leading-none font-bold tracking-[-1px]"><span className="text-[#0a1896]">E</span><span className="text-[#1a96b4]">Q</span></div>
              </Tile>
            }
          />
          <div className="w-[451px] shrink-0" />
          <ToolItem width="w-[60px]" label="Preferences" icon={<Wrench className="w-[36px] h-[34px] text-[#9a9a9a]" fill="#e6e6e6" strokeWidth={1.1} />} />
        </div>

        <div className="flex-1 min-h-0 flex">
          <Sidebar />
          <div className="flex-1 min-w-0 flex flex-col">
            {/* graph header */}
            <div className="h-[65px] shrink-0 flex">
              <div className="w-[54px] shrink-0 flex flex-col items-center pt-[16px]">
                <div className="h-[24px] flex items-center justify-center"><CameraIcon /></div>
                <div className="mt-[3px] text-[11px] leading-[15px] text-[#222]">Capture</div>
              </div>
              <GraphTabs />
              <div className="w-[267px] shrink-0" />
              <ViewItem width="w-[60px]" label="Scrollbars" icon={<ScrollbarsIcon />} />
              <ViewItem width="w-[66px]" label="Freq. Axis" icon={<FreqAxisIcon />} />
              <ViewItem width="w-[48px]" label="Limits" icon={<LimitsIcon />} />
              <ViewItem width="w-[60px]" label="Controls" icon={<FaCog className="w-[24px] h-[24px] text-[#9c9c9c]" />} />
            </div>

            {/* graph */}
            <div className="relative h-[772px] shrink-0">
              <WaterfallChart />
              <button className="absolute left-[41px] top-[726px] w-[60px] h-[21px] rounded-[4px] border border-[#888] bg-linear-to-b from-[#fbfbfb] to-[#cfcfcf] text-[11.5px] text-[#222]">
                <span className="underline">G</span>enerate
              </button>
            </div>

            {/* horizontal scrollbar */}
            <div className="ml-[39px] w-[1303px] h-[16px] shrink-0 bg-[#f0f0f0] flex items-center">
              <div className="ml-[6px] w-0 h-0 border-y-[3px] border-y-transparent border-r-[4px] border-r-[#333]" />
              <div className="ml-[274px] w-[460px] h-[15px] rounded-[2px] border border-[#bbb] bg-linear-to-b from-[#f2f2f2] to-[#c0c0c0] flex items-center justify-center gap-[2px]">
                <div className="w-px h-[6px] bg-[#666]" />
                <div className="w-px h-[6px] bg-[#666]" />
                <div className="w-px h-[6px] bg-[#666]" />
              </div>
              <div className="ml-auto mr-[6px] w-0 h-0 border-y-[3px] border-y-transparent border-l-[4px] border-l-[#333]" />
            </div>

            {/* legend */}
            <div className="ml-[380px] mt-[3px] w-[618px] h-[21px] shrink-0 bg-white shadow-[0_0_3px_2px_#8a8a8a] flex items-center pl-[5px] text-[11.5px] whitespace-nowrap">
              <LegendCheck />
              <span className="ml-[5px] w-[148px] text-[#a80000]">Dez 28 16:40:25</span>
              <div className="w-[31px] h-[2px] bg-[#8a0000]" />
              <span className="ml-[20px] w-[85px] text-[#a80000]">-180,0 dB</span>
              <LegendCheck muted />
              <span className="ml-[5px] w-[233px] text-[#888]">No overlay</span>
              <span className="text-[#888]">dB</span>
            </div>
          </div>
        </div>
      </div>

      {/* status bar */}
      <div className="h-[23px] shrink-0 flex bg-[#d9d9d9] border-t border-[#9a9a9a] text-[11px] leading-[22px] text-[#222] whitespace-nowrap">
        <div className="w-[80px] pl-[3px] border-r border-[#f6f6f6]">48/75MB</div>
        <div className="w-[57px] pl-[5px] border-r border-[#f6f6f6]">44100 Hz</div>
        <div className="w-[39px] pl-[3px] border-r border-[#f6f6f6]">16 Bit</div>
        <div className="w-[1300px] pl-[4px] border-r border-[#f6f6f6]">R button to pan; Ctrl+R button to measure; wheel to zoom;</div>
      </div>

      {/* taskbar */}
      <div className="h-[40px] shrink-0 flex items-center bg-linear-to-b from-[#24374f] to-[#0e1f35] border-t border-[#0a1420] text-white whitespace-nowrap">
        <div className="ml-[8px] w-[38px] shrink-0 flex justify-center"><StartOrb /></div>
        <div className="ml-[27px] w-[32px] shrink-0"><IeIcon /></div>
        <div className="ml-[29px] w-[32px] shrink-0"><FolderTaskIcon /></div>
        <div className="ml-[32px] w-[30px] shrink-0"><MediaIcon /></div>
        <div className="ml-[18px] w-[158px] h-[38px] shrink-0 rounded-[3px] border border-[#5b6b7c] bg-linear-to-b from-[#465668] to-[#25364a] flex items-center pl-[10px] gap-[3px] text-[11.5px]">
          <FirefoxIcon />
          <span>Forum - Raumak...</span>
        </div>
        <div className="ml-[4px] w-[158px] h-[38px] shrink-0 rounded-[3px] border border-[#5b6b7c] bg-linear-to-b from-[#465668] to-[#25364a] flex items-center pl-[9px] gap-[6px] text-[11.5px]">
          <JavaIcon size="w-[30px] h-[32px]" />
          <span>REW V5</span>
        </div>
        <div className="ml-[722px] w-[30px] shrink-0 text-[12px] leading-none -mt-[8px] text-center text-[#e8e8e8]">DE</div>
        <TrayIcons />
        <div className="ml-[12px] w-[62px] shrink-0 text-center text-[11.5px] leading-[17px] text-[#eef2f6]">
          <div>21:40</div>
          <div>03.01.2013</div>
        </div>
        <div className="ml-[8px] w-[13px] h-[38px] shrink-0 border border-[#465668] bg-linear-to-b from-[#55657a] to-[#1a2c44]" />
      </div>
    </div>
  );
}
